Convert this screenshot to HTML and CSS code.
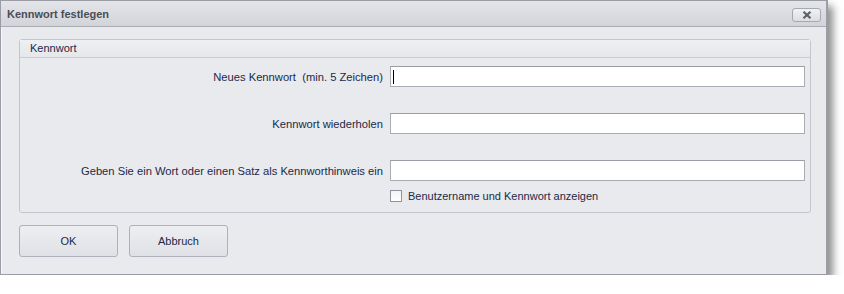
FILE: index.html
```html
<!DOCTYPE html>
<html lang="de">
<head>
  <meta charset="UTF-8">
  <title>Kennwort festlegen</title>
  <link rel="stylesheet" href="styles.css">
</head>
<body>
  <div class="window">
    <div class="titlebar">
      <span class="title">Kennwort festlegen</span>
      <button class="close-btn" type="button">
        <svg width="10" height="8" viewBox="0 0 10 8"><path d="M1.5 0.8 L8.5 7.2 M8.5 0.8 L1.5 7.2" stroke="#5d6068" stroke-width="2.2" fill="none"/></svg>
      </button>
    </div>
    <div class="content">
      <div class="group">
        <div class="group-title">Kennwort</div>
        <div class="group-body">
          <div class="fields">
            <label class="field-label">Neues Kennwort&nbsp; (min. 5 Zeichen)</label>
            <div class="field"><span class="caret"></span></div>
            <label class="field-label">Kennwort wiederholen</label>
            <div class="field"></div>
            <label class="field-label">Geben Sie ein Wort oder einen Satz als Kennworthinweis ein</label>
            <div class="field"></div>
          </div>
          <div class="check-row">
            <span class="checkbox"></span>
            <span>Benutzername und Kennwort anzeigen</span>
          </div>
        </div>
      </div>
      <div class="buttons">
        <button class="btn" type="button">OK</button>
        <button class="btn" type="button">Abbruch</button>
      </div>
    </div>
  </div>
</body>
</html>
```

FILE: styles.css
```css
body {
  margin: 0;
  background: #fff;
  font-family: "Liberation Sans", Arial, sans-serif;
  font-size: 11px;
  color: #1d2946;
}
.window {
  width: 825px;
  border: 1px solid #9a9da5;
  border-right: 2px solid #9a9da5;
  background: #e9eaee;
  box-shadow: 5px 6px 8px rgba(0,0,0,0.45);
}
.titlebar {
  height: 25px;
  border-bottom: 1px solid #a9acb3;
  background: linear-gradient(#e4e5e9, #d3d4d9);
  display: flex;
  align-items: center;
  justify-content: space-between;
  padding: 0 5px 0 6px;
}
.title {
  font-weight: bold;
  font-size: 11px;
  color: #484d58;
}
.close-btn {
  width: 29px;
  height: 14px;
  margin-top: 2px;
  border: 1px solid #a5a8b0;
  border-radius: 3px;
  background: linear-gradient(#f1f2f4, #dcdde2);
  padding: 0;
  display: flex;
  align-items: center;
  justify-content: center;
}
.content {
  padding: 12px 15px 17px 17px;
  border-left: 1px solid #f6f6f8;
}
.group {
  border: 1px solid #c3c6cd;
  border-radius: 3px;
}
.group-title {
  height: 17px;
  line-height: 17px;
  padding-left: 10px;
  border-bottom: 1px solid #c8cbd1;
  background: linear-gradient(#eef0f3, #e6e7eb);
}
.group-body {
  padding: 8px 5px 9px 0;
}
.fields {
  display: grid;
  grid-template-columns: 1fr 415px;
  column-gap: 7px;
  row-gap: 26px;
  align-items: center;
}
.field-label {
  text-align: right;
  font-size: 11.2px;
}
.field {
  height: 19px;
  border: 1px solid #a9acb3;
  border-top-color: #9a9da4;
  background: #fff;
  display: flex;
  align-items: center;
}
.caret {
  width: 1px;
  height: 14px;
  margin-left: 2px;
  background: #000;
}
.check-row {
  margin: 8px 0 0 370px;
  display: flex;
  align-items: center;
  gap: 6px;
  height: 14px;
}
.checkbox {
  width: 10px;
  height: 10px;
  border: 1px solid #8f939b;
  background: linear-gradient(#f4f4f6, #ffffff);
}
.buttons {
  display: flex;
  gap: 11px;
  margin-top: 12px;
}
.btn {
  width: 99px;
  height: 32px;
  border: 1px solid #aeb1b9;
  border-radius: 3px;
  background: linear-gradient(#eceef1, #dfe1e6);
  font-family: "Liberation Sans", Arial, sans-serif;
  font-size: 11px;
  color: #1d2946;
}
```
